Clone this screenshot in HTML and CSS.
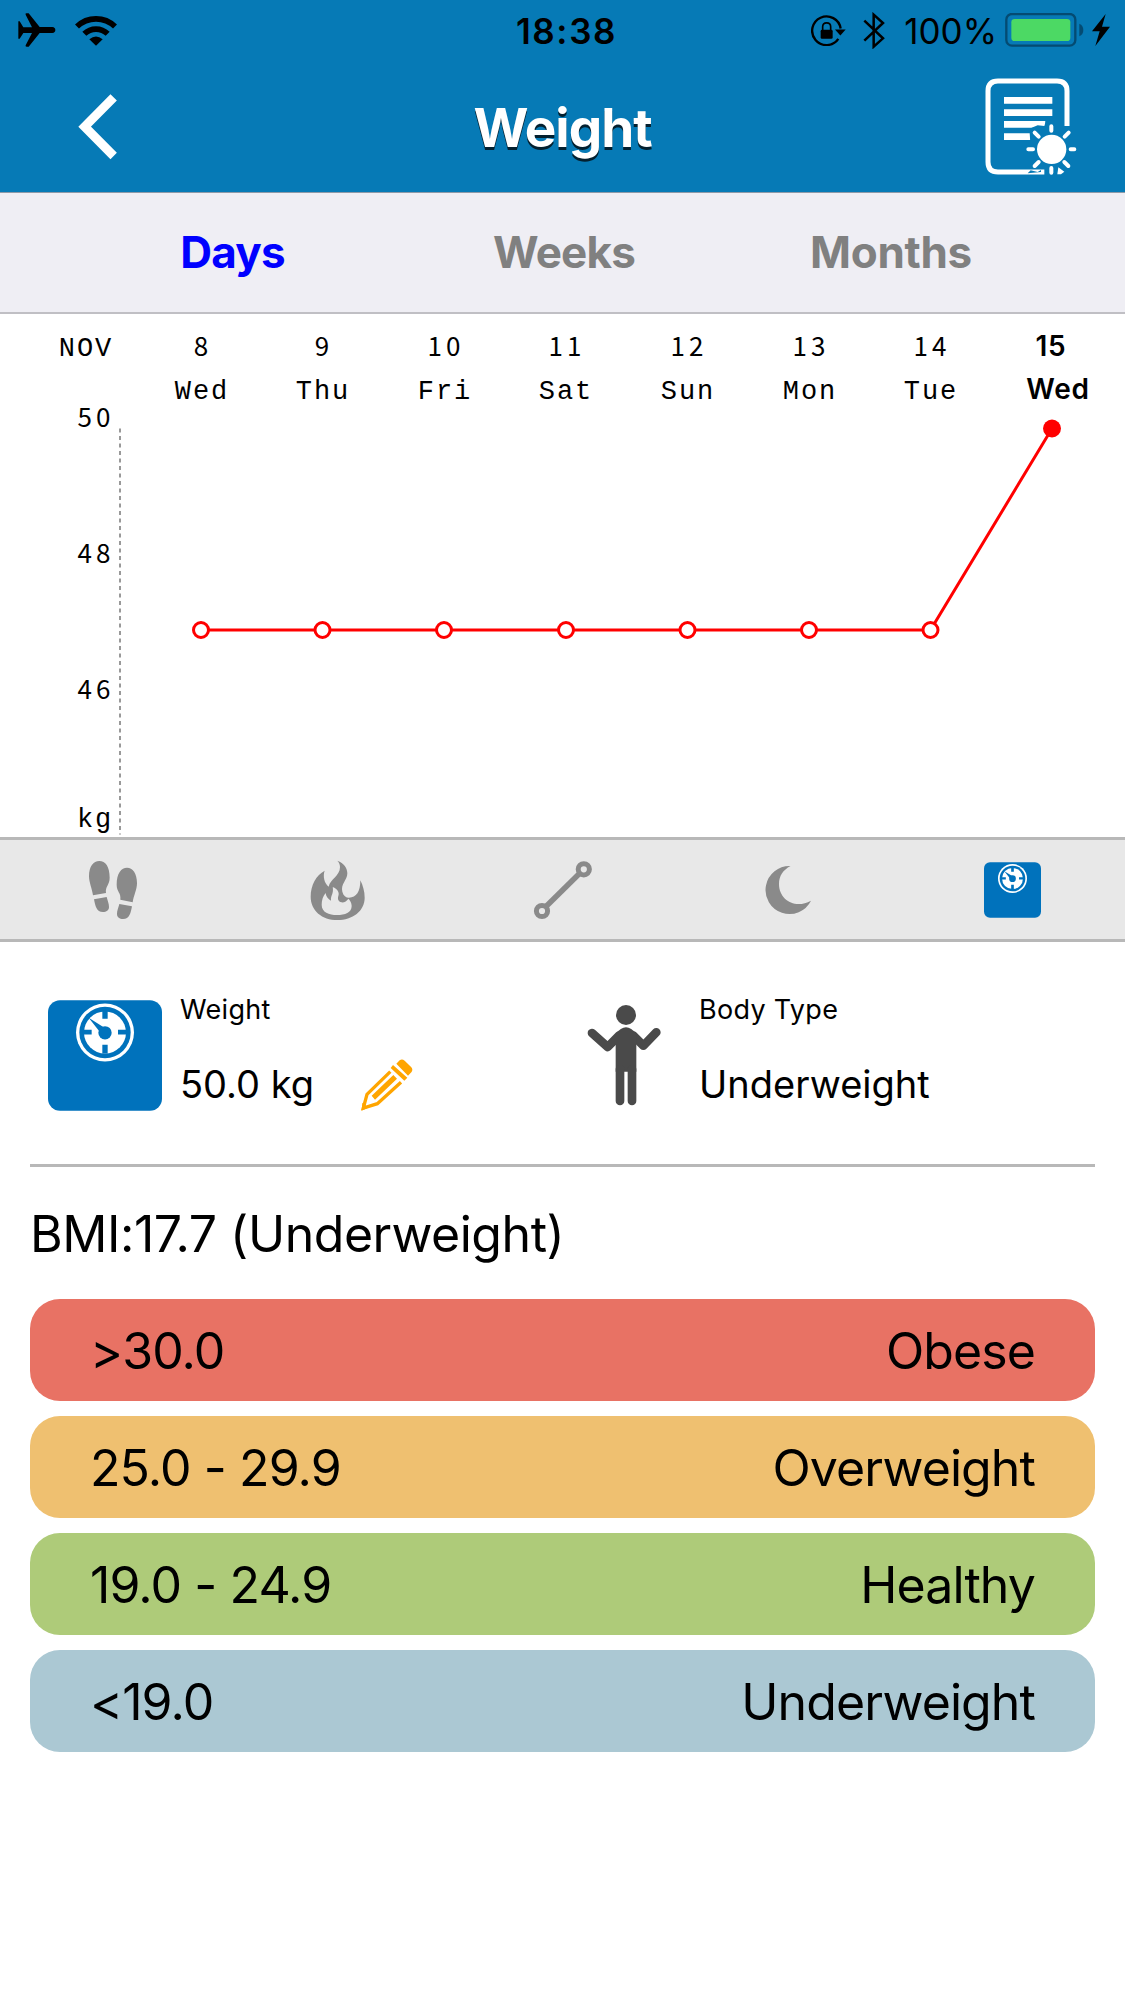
FILE: index.html
```html
<!DOCTYPE html>
<html lang="en">
<head>
  <meta charset="UTF-8">
  <title>Weight</title>
  <meta name="viewport" content="width=device-width, initial-scale=1.0">
  <link rel="stylesheet" href="styles.css">
</head>
<body>

  <!-- shared scale icon -->
  <svg class="defs" width="0" height="0">
    <symbol id="scale" viewBox="0 0 342 332">
      <rect width="342" height="332" rx="36" fill="#0072bc"/>
      <circle cx="171" cy="97" r="87" fill="#fff"/>
      <circle cx="171" cy="97" r="77" fill="#0072bc"/>
      <circle cx="171" cy="97" r="63" fill="#fff"/>
      <g fill="#0072bc">
        <circle cx="171" cy="98" r="20"/>
        <path d="M163 30h16v26h-16zM163 134h16v26h-16zM104 89h27v14h-27zM210 89h27v14h-27zM122 53l45 28-12 14z"/>
      </g>
    </symbol>
  </svg>

  <header>
    <div class="status">
      <div class="status-left">
        <svg width="38" height="34" viewBox="54 39 112 102"><path d="M54 64h4l11 18h26L76 44q-2-4 3-4h6l33 41h38q9 1 9 9t-9 9h-38l-33 41h-6q-5 0-3-4l19-37H69l-11 17h-4z"/></svg>
        <svg class="wifi" width="42" height="31" viewBox="225 43 126 92">
          <path d="M231 77a82 82 0 0 1 114 0M253 99a50 50 0 0 1 70 0" fill="none" stroke="#000" stroke-width="17"/>
          <path d="M268 115q20-16 40 0l-20 20z"/>
        </svg>
      </div>
      <div class="time">18:38</div>
      <div class="status-right">
        <svg width="35" height="31" viewBox="184 43 105 92">
          <path d="M266 114A43 43 0 1 1 273 83" fill="none" stroke="#000" stroke-width="7"/>
          <path d="M256 86h32l-16 18z"/>
          <rect x="213" y="87" width="36" height="27" rx="4"/>
          <path d="M219 88V78q0-12 12-12t12 12v10" fill="none" stroke="#000" stroke-width="5"/>
        </svg>
        <svg class="bluetooth" width="22" height="37" viewBox="341 36 66 111"><path d="M345 62l56 53-28 25V44l28 25-56 53" fill="none" stroke="#000" stroke-width="7.500"/></svg>
        <span class="percent">100%</span>
        <svg class="battery" width="79" height="34" viewBox="764 39 237 102">
          <rect x="768" y="42" width="207" height="95" rx="17" fill="none" stroke="#044b72" stroke-width="7"/>
          <rect x="783" y="57" width="177" height="66" rx="10" fill="#4cd964"/>
          <path d="M987 71q12 5 12 19t-12 19z" fill="#044b72"/>
        </svg>
        <svg class="bolt" width="18" height="32" viewBox="1026 43 54 96"><path d="M1067 43l-41 52h23l-13 44 44-58h-24z"/></svg>
      </div>
    </div>
    <div class="nav">
      <svg width="40" height="66" viewBox="233 282 120 198"><path d="M340 292l-87 88 87 88" fill="none" stroke="#fff" stroke-width="27"/></svg>
      <h1>Weight</h1>
      <svg width="92" height="98" viewBox="704 233 276 294">
        <path d="M950 377V272q0-30-30-30H743q-30 0-30 30v213q0 30 30 30h139" fill="none" stroke="#fff" stroke-width="15"/>
        <path d="M761 300h145M761 337h145M761 372h124M761 409h80" stroke="#fff" stroke-width="20"/>
        <path d="M838 398l6-16 18-7 20 2 5-16h25v30l-40 60-32-24zM832 519l9-9 21 5 10-6v6z" fill="#067ab6"/>
        <path d="M924 501l18 13-10 8h-11z" fill="#fff"/>
        <circle cx="904" cy="447" r="44" fill="#fff"/>
        <path d="M903 378v13M903 503v14M834 447h14M961 447h11M853 397l12 12M955 397l-12 12M853 497l12-12M954 497l-12-12" stroke="#fff" stroke-width="12" stroke-linecap="round"/>
      </svg>
    </div>
  </header>

  <div class="tabs">
    <span class="days">Days</span>
    <span class="weeks">Weeks</span>
    <span class="months">Months</span>
  </div>

  <svg class="chart" width="1125" height="523" viewBox="0 314 1125 523">
    <g class="name">
      <text x="86" y="356">NOV</text>
      <text x="202" y="399">Wed</text>
      <text x="323" y="399">Thu</text>
      <text x="445" y="399">Fri</text>
      <text x="566" y="399">Sat</text>
      <text x="688" y="399">Sun</text>
      <text x="810" y="399">Mon</text>
      <text x="931" y="399">Tue</text>
      <text x="95" y="827">kg</text>
    </g>
    <g class="num">
      <text x="203" y="356">8</text>
      <text x="324" y="356">9</text>
      <text x="446" y="356">10</text>
      <text x="567" y="356">11</text>
      <text x="689" y="356">12</text>
      <text x="811" y="356">13</text>
      <text x="932" y="356">14</text>
      <text x="96" y="427">50</text>
      <text x="96" y="563">48</text>
      <text x="96" y="699">46</text>
    </g>
    <g class="today">
      <text x="1051" y="356">15</text>
      <text x="1058" y="399">Wed</text>
    </g>
    <path d="M120 428.500v406" stroke="#999" stroke-width="2" stroke-dasharray="4 3.5"/>
    <path d="M201 630H930.500L1052 428.500" fill="none" stroke="#f00" stroke-width="3"/>
    <g fill="#fff" stroke="#f00" stroke-width="3">
      <circle cx="201" cy="630" r="7.500"/>
      <circle cx="322.500" cy="630" r="7.500"/>
      <circle cx="444" cy="630" r="7.500"/>
      <circle cx="566" cy="630" r="7.500"/>
      <circle cx="687.500" cy="630" r="7.500"/>
      <circle cx="809" cy="630" r="7.500"/>
      <circle cx="930.500" cy="630" r="7.500"/>
    </g>
    <circle cx="1052" cy="428.500" r="9" fill="#f00"/>
  </svg>

  <div class="toolbar">
    <!-- steps -->
    <svg width="50" height="60" viewBox="264 240 150 180" fill="#8a8a8a">
      <path d="M279 346c-3-20-12-40-12-57 0-30 13-46 31-46s31 16 31 50c0 22-14 26-11 46zM282 358l38-7c3 12 7 20 7 30 0 10-8 15-18 15-20 0-23-18-27-38z"/>
      <path d="M398 367c3-20 13-38 13-57 0-30-13-47-30-47s-31 16-31 51c0 22 14 24 11 45zM396 379l-38-7c-3 12-7 20-7 30 0 10 8 15 18 15 20 0 23-18 27-38z"/>
    </svg>
    <!-- calories -->
    <svg width="55" height="60" viewBox="931 240 165 180">
      <path d="M1013 242c20 8 30 22 30 38 0 20-21 33-15 55 3 12 11 18 20 18 22 0 34-18 34-52 8 16 13 34 13 52 0 40-36 67-82 67s-80-28-80-70c0-35 17-65 42-78-6 16-1 38 12 48 4-22 34-32 34-59 0-8-3-14-8-19z" fill="#8a8a8a"/>
      <path d="M999 321c15 6 21 17 17 27-3 9 0 17 9 19 9 1 16-3 21-11 9 9 10 18 10 22 0 20-20 27-44 27s-46-8-46-31c0-13 4-26 12-35 1 10 7 19 16 23-2-17 9-20 5-42z" fill="#e8e8e8"/>
    </svg>
    <!-- distance -->
    <svg width="60" height="60" viewBox="532 860 60 60" fill="none" stroke="#8a8a8a">
      <path d="M545 906.500L579 873" stroke-width="5.500"/>
      <circle cx="541" cy="911" r="5.600" stroke-width="5"/>
      <circle cx="582.800" cy="869.300" r="5.600" stroke-width="5"/>
    </svg>
    <!-- sleep -->
    <svg width="46" height="50" viewBox="765 865 46 50"><path d="M790.500 866a24 24 0 1 0 20.500 34.700c-16 9-32-1-32-16.700 0-8 4-14 11.500-18z" fill="#8a8a8a"/></svg>
    <svg width="57" height="56"><use href="#scale"/></svg>
  </div>

  <div class="summary">
    <div class="item weight">
      <svg width="114" height="111"><use href="#scale"/></svg>
      <div>
        <p class="label">Weight</p>
        <p class="value">50.0 kg</p>
      </div>
      <svg class="pencil" width="52" height="52" viewBox="992 265 156 156" fill="#ffa500">
        <path d="M1098 279l10-10q7-5 15 1l20 20q6 7 0 15l-10 10zM1088 283l43 38-9 9-41-38z"/>
        <path d="M1080 303L1010 371l-11 41 42-13 71-64" fill="none" stroke="#ffa500" stroke-width="10"/>
        <path d="M1089 313l11 11-66 63-10-12zM996 396l16 16-18 8z"/>
      </svg>
    </div>
    <div class="item body">
      <svg width="75" height="102" viewBox="80 100 225 306" fill="#4a4a4a" stroke="#4a4a4a">
        <circle cx="197" cy="133" r="30" stroke="none"/>
        <path d="M95 187l47 42 34-34M288 185l-39 40-30-30" fill="none" stroke-width="26" stroke-linecap="round" stroke-linejoin="round"/>
        <path d="M166 190q31-40 62 0v113h-62z" stroke="none"/>
        <path d="M179 295v96M215 295v96" stroke-width="26" stroke-linecap="round"/>
      </svg>
      <div>
        <p class="label">Body Type</p>
        <p class="value">Underweight</p>
      </div>
    </div>
  </div>

  <div class="bmi">
    <h2>BMI:17.7 (Underweight)</h2>
    <div class="row obese"><span>&gt;30.0</span><span>Obese</span></div>
    <div class="row over"><span>25.0 - 29.9</span><span>Overweight</span></div>
    <div class="row healthy"><span>19.0 - 24.9</span><span>Healthy</span></div>
    <div class="row under"><span>&lt;19.0</span><span>Underweight</span></div>
  </div>

</body>
</html>
```
FILE: styles.css
```css
* {
  box-sizing: border-box;
}
body {
  margin: 0;
  width: 1125px;
  min-height: 2001px;
  background: #fff;
  color: #000;
  font-family: Inter, 'Liberation Sans', sans-serif;
}
svg {
  display: block;
  flex-shrink: 0;
}
.defs {
  position: absolute;
}
h1, h2, p {
  margin: 0;
}
header {
  height: 193px;
  background: #067ab6;
  border-bottom: 1px solid #8e9aa8;
}
.status {
  display: grid;
  grid-template-columns: 1fr auto 1fr;
  align-items: center;
  height: 60px;
  padding: 0 15px 0 18px;
}
.status-left, .status-right {
  display: flex;
  align-items: center;
}
.status-right {
  justify-content: flex-end;
}
.wifi {
  margin-left: 19px;
}
.time {
  font-size: 35px;
  font-weight: 600;
  letter-spacing: 1.6px;
  margin: 2px 0 0 5px;
}
.bluetooth {
  margin: 0 19px 0 17px;
}
.percent {
  font-size: 35px;
  margin: 2px 8px 0 0;
}
.bolt {
  margin-left: 8px;
}
.nav {
  display: grid;
  grid-template-columns: 1fr auto 1fr;
  align-items: center;
  height: 132px;
  padding: 2px 48px 0 78px;
}
.nav svg:last-child {
  justify-self: end;
}
h1 {
  color: #fff;
  font-size: 53px;
  font-weight: 700;
  letter-spacing: -1px;
  text-shadow: 0 3px 0 #04202f;
  margin: 1px 30px 0 0;
}
.tabs {
  display: grid;
  grid-template-columns: 465px 198px 456px;
  align-items: center;
  height: 121px;
  padding-bottom: 2px;
  background: #efeef4;
  border-bottom: 2px solid #c0bfc4;
  text-align: center;
  font-size: 44px;
  font-weight: 700;
  letter-spacing: -0.3px;
  color: #808080;
}
.days {
  color: #00f;
  letter-spacing: -0.8px;
}
.weeks {
  letter-spacing: -0.8px;
}
.name {
  font: 27px 'Liberation Mono', monospace;
  letter-spacing: 1.9px;
  text-anchor: middle;
}
.num {
  font: 26px 'Noto Sans CJK SC', sans-serif;
  letter-spacing: 4px;
  text-anchor: middle;
}
.today {
  font-size: 28px;
  font-weight: 600;
  letter-spacing: 0.7px;
  text-anchor: middle;
}
.toolbar {
  display: grid;
  grid-template-columns: repeat(5, 1fr);
  place-items: center;
  height: 105px;
  background: #e8e8e8;
  border-top: 3px solid #b8b8b8;
  border-bottom: 3px solid #b8b8b8;
}
.summary {
  display: flex;
  height: 225px;
  margin: 0 30px;
  padding-top: 50px;
  border-bottom: 3px solid #b8b8b8;
}
.item {
  display: flex;
  align-items: flex-start;
}
.weight {
  width: 557px;
  padding: 8px 0 0 18px;
  gap: 18px;
}
.weight > div, .body > div {
  margin-top: -8px;
}
.body {
  padding-top: 12px;
  gap: 37px;
}
.body > div {
  margin-top: -12px;
}
.pencil {
  margin: 59px 0 0 29px;
}
.label {
  font-size: 27px;
  line-height: 36px;
  letter-spacing: 0.3px;
}
.value {
  margin-top: 32px;
  font-size: 38px;
  line-height: 48px;
}
.bmi {
  padding: 0 30px;
}
h2 {
  height: 132px;
  font-size: 50px;
  font-weight: 400;
  line-height: 135px;
  letter-spacing: -0.45px;
}
.row {
  display: flex;
  align-items: center;
  justify-content: space-between;
  height: 102px;
  margin-bottom: 15px;
  padding: 2px 60px 0 60px;
  border-radius: 30px;
  font-size: 50px;
  letter-spacing: -0.9px;
}
.obese {
  background: #e87264;
}
.over {
  background: #efc070;
}
.healthy {
  background: #aecb79;
}
.under {
  background: #abc8d3;
}
```
